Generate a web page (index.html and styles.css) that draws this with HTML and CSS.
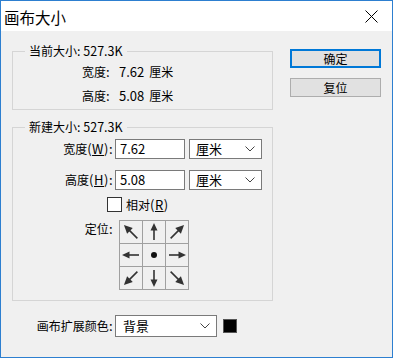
FILE: index.html
```html
<!DOCTYPE html>
<html lang="zh-CN">
<head>
<meta charset="utf-8">
<title>画布大小</title>
<link rel="stylesheet" href="styles.css">
</head>
<body>
<div class="window">
  <div class="titlebar">
    <span class="title">画布大小</span>
    <svg class="close" width="13" height="13" viewBox="0 0 13 13"><path d="M0.5 0.5 L12.5 12.5 M12.5 0.5 L0.5 12.5" stroke="#000" stroke-width="1" fill="none"/></svg>
  </div>
  <div class="content">
    <div class="main">
      <fieldset class="group g1">
        <legend>当前大小<span class="lat-l">: 527.3K</span></legend>
        <div class="info"><span class="info-lbl">宽度<span class="lat">:</span></span><span class="num">7.62</span><span class="unit-txt">厘米</span></div>
        <div class="info"><span class="info-lbl">高度<span class="lat">:</span></span><span class="num">5.08</span><span class="unit-txt">厘米</span></div>
      </fieldset>
      <fieldset class="group g2">
        <legend>新建大小<span class="lat-l">: 527.3K</span></legend>
        <div class="form">
          <div class="lbl">宽度<span class="lat">(<u>W</u>):</span></div>
          <div class="field">7.62</div>
          <div class="select unit">厘米<svg class="chev" width="10" height="6" viewBox="0 0 10 6"><path d="M0.5 0.5 L5 5 L9.5 0.5" stroke="#444" stroke-width="1" fill="none"/></svg></div>
          <div class="lbl">高度<span class="lat">(<u>H</u>):</span></div>
          <div class="field">5.08</div>
          <div class="select unit">厘米<svg class="chev" width="10" height="6" viewBox="0 0 10 6"><path d="M0.5 0.5 L5 5 L9.5 0.5" stroke="#444" stroke-width="1" fill="none"/></svg></div>
        </div>
        <div class="check-row">
          <span class="checkbox"></span><span class="check-label">相对<span class="lat">(<u>R</u>)</span></span>
        </div>
        <div class="anchor-row">
          <div class="lbl anchor-lbl">定位<span class="lat">:</span></div>
          <svg class="anchor" width="70" height="70" viewBox="0 0 70 70">
            <g stroke="#a0a0a0" stroke-width="1" fill="none">
              <rect x="0.5" y="0.5" width="69" height="69"/>
              <path d="M23.5 0 V70 M46.5 0 V70 M0 23.5 H70 M0 46.5 H70"/>
            </g>
            <defs>
              <g id="arr">
                <path d="M0 8 V-3" stroke="#333" stroke-width="1.6"/>
                <path d="M0 -9 L-3.5 -1.5 L3.5 -1.5 Z" fill="#333"/>
              </g>
              <g id="darr">
                <path d="M0 9 V-3" stroke="#333" stroke-width="1.6"/>
                <path d="M0 -10 L-4 -1.5 L4 -1.5 Z" fill="#333"/>
              </g>
            </defs>
            <use href="#darr" transform="translate(12,12) rotate(-45)"/>
            <use href="#arr" transform="translate(35,12)"/>
            <use href="#darr" transform="translate(58,12) rotate(45)"/>
            <use href="#arr" transform="translate(12,35) rotate(-90)"/>
            <circle cx="35" cy="35" r="3" fill="#111"/>
            <use href="#arr" transform="translate(58,35) rotate(90)"/>
            <use href="#darr" transform="translate(12,58) rotate(-135)"/>
            <use href="#arr" transform="translate(35,58) rotate(180)"/>
            <use href="#darr" transform="translate(58,58) rotate(135)"/>
          </svg>
        </div>
      </fieldset>
      <div class="ext-row">
        <div class="lbl">画布扩展颜色<span class="lat">:</span></div>
        <div class="select ext">背景<svg class="chev" width="10" height="6" viewBox="0 0 10 6"><path d="M0.5 0.5 L5 5 L9.5 0.5" stroke="#444" stroke-width="1" fill="none"/></svg></div>
        <span class="swatch"></span>
      </div>
    </div>
    <div class="buttons">
      <div class="btn primary">确定</div>
      <div class="btn">复位</div>
    </div>
  </div>
</div>
</body>
</html>
```
FILE: styles.css
```css
* { box-sizing: border-box; }
html, body { margin: 0; padding: 0; }
body {
  font-family: "Noto Sans CJK SC", "Noto Sans", sans-serif;
  font-size: 12px;
  color: #000;
  background: #f0f0f0;
}
.window {
  width: 393px;
  height: 358px;
  border: 1px solid #2d7fd0;
  background: #f0f0f0;
  display: flex;
  flex-direction: column;
}
.titlebar {
  height: 30px;
  background: #fff;
  display: flex;
  align-items: center;
  justify-content: space-between;
  padding: 0 14px 0 3px;
}
.title {
  font-size: 15.5px;
  line-height: 20px;
  margin-top: 1px;
}
.close { display: block; margin-top: 1px; }
.content {
  display: flex;
  padding: 12px 0 0 11px;
}
.main { width: 261px; }
.group {
  margin: 0;
  padding: 0;
  border: 1px solid #d5d5d5;
  min-width: 0;
}
.group legend {
  margin-left: 12px;
  padding: 0 4px;
  line-height: 16px;
  font-size: 12px;
}
.num { font-size: 13px; }
.lat { font-size: 13px; letter-spacing: 0.5px; }
.lat-l { font-size: 12.5px; }
.g1 { padding: 1px 0 1px 0; }
.info {
  line-height: 24px;
  height: 24px;
  padding-left: 69px;
  display: flex;
  align-items: baseline;
}
.info-lbl { width: 37px; }
.unit-txt { margin-left: 5px; }
.g2 { margin-top: 9px; padding: 4px 0 10px 0; }
.form {
  display: grid;
  grid-template-columns: 100px 70px 75px;
  column-gap: 2px;
  row-gap: 11px;
}
.form .select { margin-left: 2px; }
.lbl {
  text-align: right;
  line-height: 20px;
  white-space: nowrap;
}
.form .lbl { width: 100px; }
.field {
  height: 20px;
  border: 1px solid #7a7a7a;
  background: #fff;
  font-size: 13px;
  line-height: 18px;
  padding-left: 4px;
}
.select {
  height: 20px;
  border: 1px solid #7a7a7a;
  background: #fff;
  font-size: 13px;
  line-height: 18px;
  padding: 0 6px;
  display: flex;
  align-items: center;
  justify-content: space-between;
}
.chev { display: block; }
.check-row {
  display: flex;
  align-items: center;
  margin-top: 7px;
  padding-left: 94px;
  height: 15px;
}
.checkbox {
  width: 15px;
  height: 15px;
  border: 1px solid #333;
  background: #fff;
}
.check-label { margin-left: 4px; line-height: 15px; }
.anchor-row {
  display: flex;
  align-items: flex-start;
  margin-top: 8px;
}
.anchor-lbl { width: 100px; line-height: 18px; }
.anchor { display: block; margin-left: 6px; }
.ext-row {
  display: flex;
  align-items: center;
  margin-top: 14px;
  padding-left: 1px;
}
.ext-row .lbl { width: 100px; }
.ext {
  width: 102px;
  height: 22px;
  margin-left: 2px;
  padding-left: 7px;
}
.swatch {
  width: 14px;
  height: 14px;
  margin-left: 6px;
  background: #000;
  border: 1px solid #555;
}
.buttons {
  margin-left: 17px;
  margin-top: 6px;
  width: 91px;
  display: flex;
  flex-direction: column;
  gap: 10px;
}
.btn {
  height: 19px;
  border: 1px solid #adadad;
  background: #e1e1e1;
  text-align: center;
  line-height: 17px;
  font-size: 12px;
}
.btn.primary { border: 2px solid #0078d7; line-height: 15px; }
```
